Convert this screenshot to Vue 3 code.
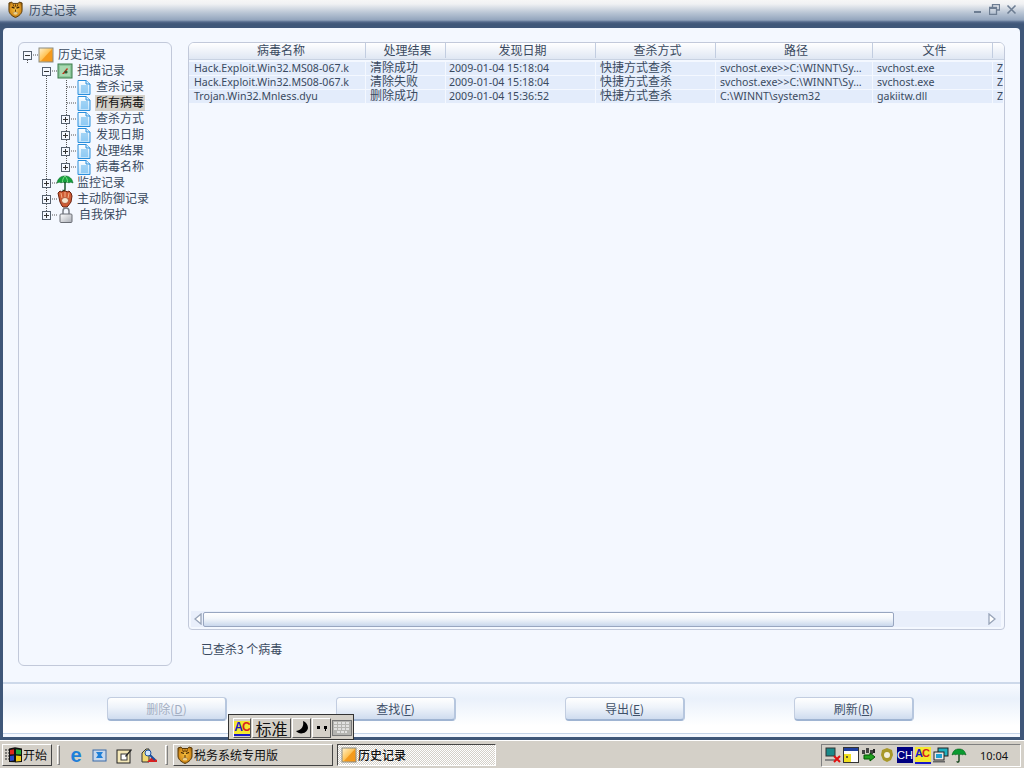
<script setup>
const cols = [
  { label: '病毒名称', w: 177 },
  { label: '处理结果', w: 80 },
  { label: '发现日期', w: 150 },
  { label: '查杀方式', w: 120 },
  { label: '路径', w: 157 },
  { label: '文件', w: 120 },
  { label: '', w: 11 }
]
const rows = [
  ['Hack.Exploit.Win32.MS08-067.k', '清除成功', '2009-01-04 15:18:04', '快捷方式查杀', 'svchost.exe>>C:\\WINNT\\Sy…', 'svchost.exe', 'Z'],
  ['Hack.Exploit.Win32.MS08-067.k', '清除失败', '2009-01-04 15:18:04', '快捷方式查杀', 'svchost.exe>>C:\\WINNT\\Sy…', 'svchost.exe', 'Z'],
  ['Trojan.Win32.Mnless.dyu', '删除成功', '2009-01-04 15:36:52', '快捷方式查杀', 'C:\\WINNT\\system32', 'gakiitw.dll', 'Z']
]
const tree = [
  { label: '历史记录', level: 0, exp: '-', icon: 'box' },
  { label: '扫描记录', level: 1, exp: '-', icon: 'scan' },
  { label: '查杀记录', level: 2, exp: '', icon: 'doc' },
  { label: '所有病毒', level: 2, exp: '', icon: 'doc', sel: true },
  { label: '查杀方式', level: 2, exp: '+', icon: 'doc' },
  { label: '发现日期', level: 2, exp: '+', icon: 'doc' },
  { label: '处理结果', level: 2, exp: '+', icon: 'doc' },
  { label: '病毒名称', level: 2, exp: '+', icon: 'doc' },
  { label: '监控记录', level: 1, exp: '+', icon: 'umbrella' },
  { label: '主动防御记录', level: 1, exp: '+', icon: 'glove' },
  { label: '自我保护', level: 1, exp: '+', icon: 'lock' }
]
const buttons = [
  { label: '删除', key: 'D', disabled: true },
  { label: '查找', key: 'F' },
  { label: '导出', key: 'E' },
  { label: '刷新', key: 'R' }
]
</script>

<template>
  <div class="screen">
    <svg class="defs" width="0" height="0">
      <defs>
        <linearGradient id="gBox" x1="0" y1="0" x2="1" y2="1"><stop offset="0" stop-color="#fff3d0"/><stop offset="0.45" stop-color="#ffc860"/><stop offset="1" stop-color="#f08a10"/></linearGradient>
        <linearGradient id="gDoc" x1="0" y1="0" x2="0" y2="1"><stop offset="0" stop-color="#ffffff"/><stop offset="1" stop-color="#bfe2fb"/></linearGradient>
        <linearGradient id="gLock" x1="0" y1="0" x2="1" y2="1"><stop offset="0" stop-color="#ffffff"/><stop offset="1" stop-color="#a8acb4"/></linearGradient>
        <radialGradient id="gTiger" cx="0.5" cy="0.45" r="0.6"><stop offset="0" stop-color="#f6c040"/><stop offset="0.7" stop-color="#d8901c"/><stop offset="1" stop-color="#8a5a10"/></radialGradient>
        <symbol id="box" viewBox="0 0 16 16"><rect x="1" y="1" width="14" height="14" fill="url(#gBox)" stroke="#8a8a80"/><path d="M14 2v12H3z" fill="#f59a1c"/></symbol>
        <symbol id="doc" viewBox="0 0 16 16"><path d="M2 1.500h8l4 3.500v10.500H2z" fill="url(#gDoc)" stroke="#2a8fdc"/><path d="M10 1.500v3.500h4" fill="#d8f0ff" stroke="#2a8fdc"/><path d="M5 7h7M5 9h7M5 11h7M5 13h7" stroke="#58b0ec"/></symbol>
        <symbol id="scan" viewBox="0 0 16 16"><rect x="1" y="1" width="14" height="14" fill="#8cc79a" stroke="#3a7a4a"/><rect x="3" y="3" width="10" height="10" fill="#a8d8b0"/><path d="M5 11l5-6 1 1-4 5z" fill="#c0341c"/><circle cx="9" cy="9" r="1.600" fill="#2a5a34"/></symbol>
        <symbol id="umbrella" viewBox="0 0 18 18"><path d="M1 9C2 4 5 2 9 2s7 2 8 7c-2-1-3-1-4 0-1-1-3-1-4 0-1-1-3-1-4 0-1-1-2-1-4 0z" fill="#14a03c" stroke="#0b6a2a" stroke-width=".6"/><path d="M9 2c-2 2-2.500 4-2.500 6M9 2c2 2 2.500 4 2.500 6" stroke="#7fdc8a" fill="none"/><path d="M9 8v7.500c0 1.500-2 1.500-2 .300" stroke="#0a4a20" stroke-width="1.400" fill="none"/></symbol>
        <symbol id="umbrellaDark" viewBox="0 0 16 16"><path d="M1 8C2 4 4 2 8 2s6 2 7 6c-2-1-3-1-3.500 0-1-1-2-1-3.500 0-1-1-2.500-1-3.500 0-.5-1-1.500-1-3.500 0z" fill="#0a9a30" stroke="#055a1a" stroke-width=".6"/><path d="M8 8v6c0 1.500-2 1.500-2 .300" stroke="#063a10" stroke-width="1.300" fill="none"/></symbol>
        <symbol id="glove" viewBox="0 0 16 18"><path d="M1 3l2-2 2 1 1-1 3 0 1 1 2-1 2 2 1 3-1 6-3 4-1 1H6l-1-1-2-4z" fill="#cf5c34" stroke="#6a2210"/><path d="M4 3l1 5M8 2v6M12 3l-1 5" stroke="#f4b088"/><ellipse cx="8" cy="10.500" rx="3.500" ry="3" fill="#f6e4cc" stroke="#9a3a1c" stroke-width=".7"/></symbol>
        <symbol id="lock" viewBox="0 0 14 16"><path d="M4 7V4a3 3 0 0 1 6 0v3" fill="none" stroke="#7a7e86" stroke-width="1.500"/><rect x="1" y="7" width="12" height="8.500" rx="1" fill="url(#gLock)" stroke="#6a6e76"/></symbol>
        <symbol id="tiger" viewBox="0 0 16 18"><path d="M1 2l3-1 1 1.500h6L12 1l3 1v8c0 3-3 6-7 7.500C4 16 1 13 1 10z" fill="url(#gTiger)" stroke="#5a3a08"/><path d="M4 6.500l3 1M12 6.500l-3 1" stroke="#3a2004" stroke-width="1.300"/><path d="M8 9v2.500M5.500 13l2.500-1.500L10.500 13M8 3.500V6M5.500 3.500L6.500 6M10.500 3.500L9.500 6" stroke="#5a3208" fill="none"/><ellipse cx="8" cy="13" rx="2.500" ry="1.500" fill="#f8e8b0" opacity=".7"/></symbol>
      </defs>
    </svg>

    <div class="window">
      <header class="titlebar">
        <svg class="t-logo"><use href="#tiger"/></svg>
        <span class="t-text">历史记录</span>
        <div class="t-ctrls">
          <svg width="11" height="11" viewBox="0 0 11 11"><rect x="2" y="7" width="7" height="2" fill="#6d7d92"/></svg>
          <svg width="11" height="11" viewBox="0 0 11 11"><path d="M3.500 3V.5h7V6H8M.5 3.500h7v7h-7z" fill="none" stroke="#6d7d92" stroke-width="1.300"/><rect x="1" y="3" width="6" height="2" fill="#6d7d92"/></svg>
          <svg width="11" height="11" viewBox="0 0 11 11"><path d="M1.500 1.500l8 8M9.500 1.500l-8 8" stroke="#6d7d92" stroke-width="1.600"/></svg>
        </div>
      </header>

      <main class="client">
        <div class="content">
          <aside class="tree">
            <svg class="tree-lines" width="154" height="200" viewBox="0 0 154 200">
              <g stroke="#555" stroke-dasharray="1 1" fill="none">
                <path d="M8.500 17v4M27.500 33v139"/>
                <path d="M47.500 33v92"/>
                <path d="M14 12h5M33 28h5M48 44h10M48 60h10M52 76h6M52 92h6M52 108h6M52 124h6M33 140h5M33 156h5M33 172h5"/>
              </g>
            </svg>
            <div v-for="n in tree" :key="n.label" class="node" :class="'lv' + n.level">
              <span class="exp" :class="{ none: !n.exp }">
                <template v-if="n.exp">
                  <i class="h"></i><i v-if="n.exp === '+'" class="v"></i>
                </template>
              </span>
              <svg class="n-ic" :class="n.icon"><use :href="'#' + n.icon"/></svg>
              <span class="n-label" :class="{ sel: n.sel }">{{ n.label }}</span>
            </div>
          </aside>

          <section class="right">
            <div class="list">
              <div class="thead">
                <div v-for="c in cols" :key="c.w + c.label" class="th" :style="{ width: c.w + 'px' }">{{ c.label }}</div>
              </div>
              <div class="tbody">
                <div v-for="(r, i) in rows" :key="i" class="tr">
                  <div v-for="(v, j) in r" :key="j" class="td" :style="{ width: cols[j].w + 'px' }">{{ v }}</div>
                </div>
              </div>
              <div class="hscroll">
                <svg class="arrow" width="8" height="12" viewBox="0 0 8 12"><path d="M7 1L1 6l6 5z" fill="#fff" stroke="#98a4b8" stroke-width="1.300"/></svg>
                <div class="thumb"></div>
                <svg class="arrow end" width="8" height="12" viewBox="0 0 8 12"><path d="M1 1l6 5-6 5z" fill="#fff" stroke="#98a4b8" stroke-width="1.300"/></svg>
              </div>
            </div>
            <p class="status">已查杀3 个病毒</p>
          </section>
        </div>

        <footer class="actions">
          <button v-for="b in buttons" :key="b.key" class="btn" :class="{ off: b.disabled }">{{ b.label }}(<u>{{ b.key }}</u>)</button>
        </footer>
      </main>
    </div>

    <div class="ime">
      <span class="ime-cell c1"><span class="abc"><b>A</b><em>C</em></span></span>
      <span class="ime-cell c2">标准</span>
      <span class="ime-cell c3"><svg width="16" height="16" viewBox="0 0 16 16"><path d="M9 1c1 5-1 9-7 10 3 4 11 3 12-3 0-3-2-6-5-7z" fill="#000"/></svg></span>
      <span class="ime-cell c4"><svg width="14" height="12" viewBox="0 0 14 12"><rect x="2" y="4" width="3" height="3"/><rect x="9" y="4" width="3" height="3"/><rect x="10" y="7" width="1" height="2"/></svg></span>
      <span class="ime-cell c5"><svg width="20" height="16" viewBox="0 0 20 16"><rect x=".5" y=".5" width="19" height="15" fill="#b4b4b0" stroke="#777"/><path d="M2 3h16M2 6h16M2 9h16M5 12h10" stroke="#f0f0f0" stroke-width="1.500" stroke-dasharray="3 1"/></svg></span>
    </div>

    <footer class="taskbar">
      <button class="start">
        <svg width="18" height="16" viewBox="0 0 18 16"><path d="M0 3h4M0 6h4M0 9h4M0 12h4" stroke="#222" stroke-dasharray="2 1"/><path d="M4 1.500l6-1.200v15L4 15z" fill="#111"/><path d="M10 .3l7 1.200V15l-7 .5z" fill="#111"/><path d="M5 3l4-.8v5L5 7.500z" fill="#e0281c"/><path d="M11 2.200l5 .8v4.500l-5-.3z" fill="#28a838"/><path d="M5 9l4-.4v5L5 14z" fill="#2848c8"/><path d="M11 8.600l5 .4v5l-5 .4z" fill="#f0c818"/></svg>
        <span>开始</span>
      </button>
      <span class="grip first"></span>
      <div class="quick">
        <span class="ie">e</span>
        <svg width="16" height="16" viewBox="0 0 16 16"><rect x="1" y="3" width="13" height="11" fill="#c8d8ec" stroke="#3a6aa8"/><path d="M4 5h7l-2 3 2 3H4l2-3z" fill="#1f7fd8"/></svg>
        <svg width="17" height="17" viewBox="0 0 17 17"><rect x="1" y="3" width="13" height="13" fill="#f4e8b8" stroke="#222"/><rect x="5" y="7" width="6" height="6" fill="#fff" stroke="#333"/><path d="M9 9l6-7 1 1-6 7z" fill="#2a2a2a"/></svg>
        <svg width="17" height="17" viewBox="0 0 17 17"><path d="M1 15V6l4-4h3v13z" fill="#f0d870" stroke="#333"/><path d="M6 15l5-5 5 3v2z" fill="#d82020"/><circle cx="7" cy="6" r="3" fill="#cfe6ff" stroke="#1a50a0"/><path d="M9 8l5 5" stroke="#1a50a0" stroke-width="2"/></svg>
      </div>
      <span class="grip second"></span>
      <div class="task">
        <svg width="16" height="18"><use href="#tiger"/></svg>
        <span>税务系统专用版</span>
      </div>
      <div class="task active">
        <svg width="16" height="16"><use href="#box"/></svg>
        <span>历史记录</span>
      </div>
      <div class="tray">
        <div class="tray-icons">
          <svg width="16" height="16" viewBox="0 0 16 16"><rect x="1" y="1" width="9" height="8" fill="#1a8a8a" stroke="#333"/><path d="M0 12h11v2H0z" fill="#888"/><path d="M9 9l6 6M15 9l-6 6" stroke="#e01010" stroke-width="2"/></svg>
          <svg width="16" height="16" viewBox="0 0 16 16"><rect x=".5" y=".5" width="15" height="15" fill="#fff" stroke="#333"/><rect x="1" y="1" width="14" height="3" fill="#2040a0"/><rect x="1" y="7" width="7" height="8" fill="#f0e020"/><circle cx="4" cy="10" r="1" fill="#333"/></svg>
          <svg width="16" height="16" viewBox="0 0 16 16"><path d="M1 3h3v4H1zM5 1h3v5H5zM9 3h3v4H9z" fill="#444"/><path d="M3 8h6V6l5 4-5 4v-2H3z" fill="#20a020" stroke="#050"/><path d="M13 2v4" stroke="#222" stroke-width="2"/></svg>
          <svg width="16" height="16" viewBox="0 0 16 16"><path d="M8 1l5 2 1 5-2 5-4 2-4-2-2-5 1-5z" fill="#a89828"/><circle cx="8" cy="8" r="3" fill="#f4f0e0"/></svg>
          <span class="ch">CH</span>
          <span class="abc small"><b>A</b><em>C</em></span>
          <svg width="16" height="16" viewBox="0 0 16 16"><rect x="5" y="1" width="10" height="8" fill="#20b0c0" stroke="#222"/><rect x="1" y="5" width="10" height="8" fill="#e8e8e8" stroke="#222"/><rect x="3" y="7" width="6" height="4" fill="#20a0d0"/><path d="M0 14h12v1.500H0z" fill="#666"/></svg>
          <svg width="16" height="16"><use href="#umbrellaDark"/></svg>
        </div>
        <span class="clock">10:04</span>
      </div>
    </footer>
  </div>
</template>

<style>
html, body { margin: 0; padding: 0; overflow: hidden; }
</style>

<style scoped>
.screen {
  position: relative;
  width: 1024px;
  height: 768px;
  overflow: hidden;
  display: flex;
  flex-direction: column;
  font: 12px/1 "Noto Sans CJK SC", "Liberation Sans", sans-serif;
  background: #d4d0c8;
}
.defs { position: absolute; }
.window {
  height: 740px;
  display: flex;
  flex-direction: column;
  background: #3f5779;
  padding: 0 4px 3px 3px;
  box-sizing: border-box;
}
.titlebar {
  height: 28px;
  margin: 0 -4px 0 -3px;
  padding: 0 0 9px 8px;
  box-sizing: border-box;
  display: flex;
  align-items: center;
  background: linear-gradient(#f6f6f6 0, #f0f1f3 4px, #b8c4d4 13px, #93a5bd 20px, #52688a 22px, #3f5779 24px);
  color: #3a4a60;
}
.t-logo { width: 15px; height: 17px; margin-right: 6px; }
.t-text { font-size: 12px; }
.t-ctrls { margin-left: auto; display: flex; gap: 6px; padding-right: 7px; }
.client {
  flex: 1;
  display: flex;
  flex-direction: column;
  background: #f4f8ff;
  border-radius: 4px 4px 0 0;
}
.content {
  height: 654px;
  display: flex;
  padding: 14px 15px 0 15px;
  gap: 16px;
  box-sizing: border-box;
}
.tree {
  position: relative;
  width: 154px;
  height: 624px;
  box-sizing: border-box;
  border: 1px solid #c2c9da;
  border-radius: 6px;
  padding-top: 4px;
}
.tree-lines { position: absolute; left: 0; top: 0; }
.node {
  position: relative;
  height: 16px;
  display: flex;
  align-items: center;
  color: #3a4a60;
  font-size: 12px;
}
.lv0 { padding-left: 4px; }
.lv1 { padding-left: 23px; }
.lv2 { padding-left: 42px; }
.exp {
  position: relative;
  width: 9px;
  height: 9px;
  box-sizing: border-box;
  border: 1px solid #55606e;
  background: #f4f8ff;
  flex: none;
  margin-right: 6px;
}
.exp.none { visibility: hidden; }
.exp .h { position: absolute; left: 1px; top: 3px; width: 5px; height: 1px; background: #333; }
.exp .v { position: absolute; left: 3px; top: 1px; width: 1px; height: 5px; background: #333; }
.n-ic { width: 16px; height: 16px; flex: none; margin-right: 3px; background: #f4f8ff; }
.n-ic.umbrella { width: 18px; height: 18px; margin: 0 2px 0 -1px; background: none; }
.n-ic.glove { width: 16px; height: 18px; margin-right: 3px; background: none; }
.n-ic.lock { width: 14px; margin: 0 5px 0 2px; background: none; }
.n-label { padding: 0 1px 3px; white-space: nowrap; height: 13px; line-height: 13px; }
.n-label.sel { background: #d4d0c8; color: #111; }
.right { flex: 1; display: flex; flex-direction: column; min-width: 0; }
.list {
  position: relative;
  height: 588px;
  box-sizing: border-box;
  border: 1px solid #c2c9da;
  border-radius: 6px 6px 4px 4px;
  display: flex;
  flex-direction: column;
  overflow: hidden;
}
.thead {
  height: 15px;
  padding-bottom: 1px;
  display: flex;
  background: linear-gradient(#ffffff, #dfe7f3);
  border-bottom: 1px solid #c8d2e2;
  box-sizing: content-box;
}
.th {
  box-sizing: border-box;
  flex: none;
  border-right: 1px solid #c2cde0;
  padding-left: 4px;
  text-align: center;
  color: #3a4a60;
  line-height: 13px;
  font-size: 12px;
}
.th:first-child { padding-left: 8px; }
.th:last-child { border-right: 0; }
.tbody { flex: 1; padding-top: 2px; overflow: hidden; }
.tr { display: flex; height: 14px; }
.td {
  box-sizing: border-box;
  flex: none;
  height: 13px;
  background: #e3ecfb;
  border-right: 1px solid #f4f8ff;
  padding-left: 4px;
  color: #3a4a60;
  line-height: 12px;
  white-space: nowrap;
  overflow: visible;
  font-family: "Noto Sans", "Noto Sans CJK SC", sans-serif;
  font-size: 10.600px;
}
.td:first-child { padding-left: 5px; }
.td:nth-child(3) { padding-left: 3px; }
.td:last-child { overflow: hidden; }
.td:nth-child(2), .td:nth-child(4) { font: 12px/12px "Liberation Sans", "Noto Sans CJK SC", sans-serif; }
.hscroll {
  height: 16px;
  margin: 0 3px 2px 2px;
  background: #e9effb;
  display: flex;
  align-items: center;
  padding: 0 5px 0 3px;
  position: relative;
}
.thumb {
  box-sizing: border-box;
  width: 691px;
  height: 15px;
  margin-left: 1px;
  border: 1px solid #98a6c0;
  border-radius: 2px;
  background: linear-gradient(#ffffff, #f2f6fb 45%, #c9d7ec);
}
.arrow { flex: none; }
.arrow.end { margin-left: auto; }
.status {
  margin: 13px 0 0 13px;
  color: #3a4a60;
  font-size: 12px;
}
.actions {
  flex: 1;
  margin-bottom: 3px;
  display: flex;
  align-items: flex-start;
  gap: 109px;
  padding: 13px 0 0 104px;
  box-sizing: border-box;
  border-top: 2px solid #cdd9ea;
  border-bottom: 1px solid #c5d4e8;
  background: linear-gradient(#f7faff, #eaf1fb 30%, #ffffff 85%);
}
.btn {
  width: 120px;
  height: 24px;
  padding: 0;
  box-sizing: border-box;
  border: 1px solid #c2cde0;
  border-bottom: 2px solid #9fb4d2;
  border-right: 2px solid #b6c6de;
  border-radius: 4px;
  background: linear-gradient(#ffffff, #eef3fa 45%, #cfdcef);
  color: #3f5068;
  font: 12px/1 "Noto Sans CJK SC", "Liberation Sans", sans-serif;
}
.btn.off { color: #a3aec2; }

.ime {
  position: absolute;
  left: 228px;
  top: 714px;
  width: 126px;
  height: 26px;
  box-sizing: border-box;
  padding: 3px 2px 3px 4px;
  display: flex;
  gap: 1px;
  background: #d4d0c8;
  border: 1px solid #222;
  border-top-color: #e8e8e8;
  border-left-color: #e8e8e8;
  outline: 1px solid #333;
  outline-offset: -1px;
}
.ime-cell {
  height: 20px;
  display: flex;
  align-items: center;
  justify-content: center;
  border: 1px solid;
  border-color: #fff #555 #555 #fff;
  box-sizing: border-box;
  flex: none;
}
.c1 { width: 18px; }
.c2 { width: 39px; font-size: 16px; color: #111; }
.c3 { width: 19px; }
.c4 { width: 19px; }
.c5 { width: 20px; border: 0; }
.abc {
  display: block;
  font: bold 12px/13px "Liberation Sans", sans-serif;
  letter-spacing: -1px;
  background: #f4e830;
  border-bottom: 2px solid #1818c8;
  white-space: nowrap;
  overflow: hidden;
}
.abc b { color: #1818c8; }
.abc em { color: #d82020; font-style: normal; }
.ie {
  width: 16px;
  height: 18px;
  flex: none;
  color: #1f7fd8;
  text-align: center;
  font: bold 20px/18px "Liberation Sans", sans-serif;
}
.taskbar {
  flex: 1;
  display: flex;
  align-items: center;
  padding: 1px 3px 0 2px;
  background: #d4d0c8;
  border-top: 1px solid #fff;
  color: #111;
}
.start {
  box-sizing: border-box;
  width: 50px;
  height: 22px;
  padding: 0 0 0 2px;
  display: flex;
  align-items: center;
  gap: 0;
  background: #d4d0c8;
  border: 1px solid;
  border-color: #fff #444 #444 #fff;
  font: 12px/1 "Noto Sans CJK SC", sans-serif;
  color: #111;
}
.grip {
  width: 3px;
  height: 20px;
  flex: none;
  border: 1px solid;
  border-color: #fff #808080 #808080 #fff;
  box-sizing: border-box;
}
.grip.first { margin: 0 7px 0 5px; }
.grip.second { margin: 0 0 0 2px; }
.quick { display: flex; align-items: center; gap: 8px; width: 96px; padding-left: 1px; box-sizing: border-box; }
.task {
  box-sizing: border-box;
  width: 160px;
  height: 22px;
  margin-left: 5px;
  padding: 0 0 0 3px;
  display: flex;
  align-items: center;
  gap: 1px;
  border: 1px solid;
  border-color: #fff #444 #444 #fff;
  font-size: 12px;
  flex: none;
}
.task.active {
  margin-left: 4px;
  width: 159px;
  border-color: #444 #fff #fff #444;
  background: repeating-conic-gradient(#fff 0 25%, #d4d0c8 0 50%) 0 0 / 2px 2px;
  font-weight: 500;
}
.tray {
  box-sizing: border-box;
  margin-left: auto;
  width: 200px;
  height: 23px;
  display: flex;
  align-items: center;
  padding-left: 3px;
  border: 1px solid;
  border-color: #808080 #fff #fff #808080;
}
.tray-icons { display: flex; align-items: center; gap: 2px; }
.ch {
  width: 16px;
  height: 16px;
  background: #000080;
  color: #fff;
  text-align: center;
  font: 11px/16px "Liberation Sans", sans-serif;
}
.abc.small { width: 16px; height: 15px; font-size: 11px; }
.clock {
  margin-left: auto;
  margin-right: 12px;
  font: 11px/1 "Noto Sans", sans-serif;
}
</style>
